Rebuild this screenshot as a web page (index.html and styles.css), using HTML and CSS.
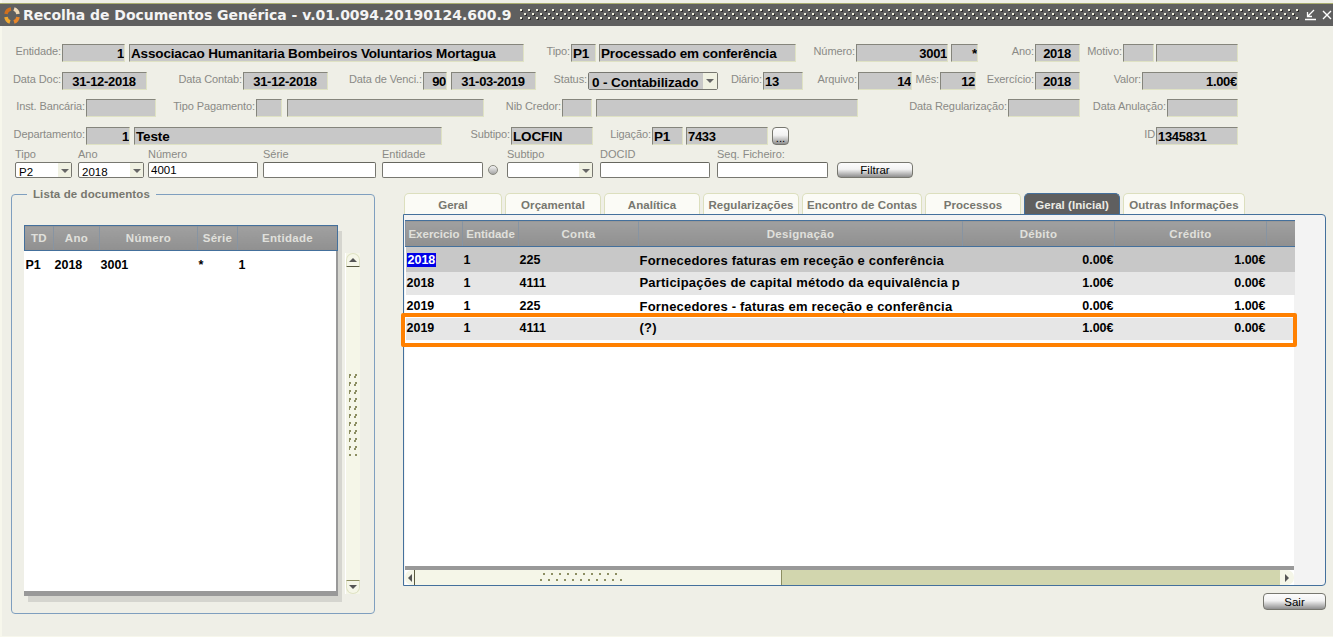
FILE: index.html
```html
<!DOCTYPE html>
<html lang="pt">

<head>
  <meta charset="utf-8">
  <title>Recolha de Documentos Genérica</title>
  <link rel="stylesheet" href="styles.css">
</head>

<body>
  <div class="titlebar">
    <svg class="app-icon" width="16" height="17" viewBox="0 0 16 17">
      <path d="M2 7 A6 6 0 0 1 7 2" fill="none" stroke="#d0701f" stroke-width="3.5"/>
      <path d="M10 2 A6 6 0 0 1 14 7" fill="none" stroke="#efd9b8" stroke-width="3.5"/>
      <path d="M14 10 A6 6 0 0 1 10 15" fill="none" stroke="#e8862a" stroke-width="3.5"/>
      <path d="M6 15 A6 6 0 0 1 2 10" fill="none" stroke="#f0a830" stroke-width="3.5"/>
    </svg>
    <span class="title-text">Recolha de Documentos Genérica - v.01.0094.20190124.600.9</span>
    <span class="title-grip"></span>
    <svg class="win-icon" width="13" height="12" viewBox="0 0 13 12">
      <path d="M10 1 L4 7 M3.5 3 V7.5 H8 M1 10.5 H12" fill="none" stroke="#fff" stroke-width="1.3"/>
    </svg>
    <svg class="win-icon close-icon" width="10" height="10" viewBox="0 0 10 10">
      <path d="M1 1 L9 9 M9 1 L1 9" fill="none" stroke="#fff" stroke-width="1.4"/>
    </svg>
  </div>

  <div class="row row1">
    <label class="w62">Entidade:</label><div class="box num dig w63">1</div>
    <div class="box ml4 w395">Associacao Humanitaria Bombeiros Voluntarios Mortagua</div>
    <label class="w47">Tipo:</label><div class="box w25">P1</div>
    <div class="box ml3 w197">Processado em conferência</div>
    <label class="w60">Número:</label><div class="box num dig w92">3001</div>
    <div class="box num ml3 w27">*</div>
    <label class="w57">Ano:</label><div class="box mid dig w45">2018</div>
    <label class="w43">Motivo:</label><div class="box w31"></div>
    <div class="box ml2 w82"></div>
  </div>

  <div class="row row2">
    <label class="w62">Data Doc:</label><div class="box mid dig w85">31-12-2018</div>
    <label class="w96">Data Contab:</label><div class="box mid dig w85">31-12-2018</div>
    <label class="w95">Data de Venci.:</label><div class="box num dig w24">90</div>
    <div class="box mid dig ml4 w85">31-03-2019</div>
    <label class="w52">Status:</label>
    <div class="combo status-combo w130"><span class="combo-text">0 - Contabilizado</span><span class="combo-arrow"></span></div>
    <label class="w45">Diário:</label><div class="box dig w40">13</div>
    <label class="w55">Arquivo:</label><div class="box num dig w54">14</div>
    <label class="w28">Mês:</label><div class="box num dig w36">12</div>
    <label class="w59">Exercício:</label><div class="box mid dig w45">2018</div>
    <label class="w62">Valor:</label><div class="box num dig w96">1.00€</div>
  </div>

  <div class="row row3">
    <label class="w86">Inst. Bancária:</label><div class="box w70"></div>
    <label class="w100">Tipo Pagamento:</label><div class="box w26"></div>
    <div class="box ml5 w197"></div>
    <label class="w78">Nib Credor:</label><div class="box w30"></div>
    <div class="box ml4 w262"></div>
    <label class="w150">Data Regularização:</label><div class="box w72"></div>
    <label class="w87">Data Anulação:</label><div class="box w71"></div>
  </div>

  <div class="row row4">
    <label class="w86">Departamento:</label><div class="box num dig w44">1</div>
    <div class="box ml4 w308">Teste</div>
    <label class="w69">Subtipo:</label><div class="box w82">LOCFIN</div>
    <label class="w59">Ligação:</label><div class="box w31">P1</div>
    <div class="box dig ml3 w82">7433</div>
    <button class="btn dots-btn ml4">...</button>
    <label class="w367">ID</label><div class="box dig w82">1345831</div>
  </div>

  <div class="filters">
    <div class="filter w57">
      <span class="filter-label">Tipo</span>
      <div class="combo"><span class="combo-text">P2</span><span class="combo-arrow"></span></div>
    </div>
    <div class="filter ml6 w66">
      <span class="filter-label">Ano</span>
      <div class="combo"><span class="combo-text">2018</span><span class="combo-arrow"></span></div>
    </div>
    <div class="filter ml4 w110">
      <span class="filter-label">Número</span>
      <input class="filter-input" type="text" value="4001">
    </div>
    <div class="filter ml5 w113">
      <span class="filter-label">Série</span>
      <input class="filter-input" type="text">
    </div>
    <div class="filter ml6 w101">
      <span class="filter-label">Entidade</span>
      <input class="filter-input" type="text">
    </div>
    <span class="radio"></span>
    <div class="filter ml9 w86">
      <span class="filter-label">Subtipo</span>
      <div class="combo"><span class="combo-text"></span><span class="combo-arrow"></span></div>
    </div>
    <div class="filter ml7 w110">
      <span class="filter-label">DOCID</span>
      <input class="filter-input" type="text">
    </div>
    <div class="filter ml7 w111">
      <span class="filter-label">Seq. Ficheiro:</span>
      <input class="filter-input" type="text">
    </div>
    <button class="btn filter-btn ml9 w76">Filtrar</button>
  </div>

  <div class="main">
    <fieldset class="doc-group">
      <legend>Lista de documentos</legend>
      <div class="doc-wrap">
        <div class="doc-list">
          <table class="grid">
            <colgroup><col class="w29"><col class="w46"><col class="w98"><col class="w40"><col class="w100"></colgroup>
            <thead>
              <tr><th>TD</th><th>Ano</th><th>Número</th><th>Série</th><th>Entidade</th></tr>
            </thead>
            <tbody>
              <tr><td>P1</td><td>2018</td><td>3001</td><td class="star">*</td><td>1</td></tr>
            </tbody>
          </table>
        </div>
        <div class="vscroll">
          <span class="cap cap-top"><i class="arrow-up"></i></span>
          <span class="vgrip"></span>
          <span class="cap cap-bottom"><i class="arrow-down"></i></span>
        </div>
      </div>
    </fieldset>

    <div class="right-col">
      <div class="tabs">
        <span class="tab w98">Geral</span>
        <span class="tab w96">Orçamental</span>
        <span class="tab w96">Analítica</span>
        <span class="tab w96">Regularizações</span>
        <span class="tab w120">Encontro de Contas</span>
        <span class="tab w96">Processos</span>
        <span class="tab active w96">Geral (Inicial)</span>
        <span class="tab w122">Outras Informações</span>
      </div>
      <div class="panel">
        <div class="sheet">
          <table class="grid movs">
            <colgroup><col class="w57"><col class="w56"><col class="w120"><col class="w324"><col class="w152"><col class="w152"><col class="w28"></colgroup>
            <thead>
              <tr><th>Exercicio</th><th>Entidade</th><th>Conta</th><th>Designação</th><th>Débito</th><th>Crédito</th><th></th></tr>
            </thead>
            <tbody>
              <tr class="current"><td><span class="selected">2018</span></td><td class="ent">1</td><td>225</td><td class="desc">Fornecedores faturas em receção e conferência</td><td class="val">0.00€</td><td class="val">1.00€</td><td></td></tr>
              <tr class="alt"><td>2018</td><td class="ent">1</td><td>4111</td><td class="desc">Participações de capital método da equivalência p</td><td class="val">1.00€</td><td class="val">0.00€</td><td></td></tr>
              <tr><td>2019</td><td class="ent">1</td><td>225</td><td class="desc">Fornecedores - faturas em receção e conferência</td><td class="val">0.00€</td><td class="val">1.00€</td><td></td></tr>
              <tr class="alt last"><td>2019</td><td class="ent">1</td><td>4111</td><td class="desc">(?)</td><td class="val">1.00€</td><td class="val">0.00€</td><td></td></tr>
            </tbody>
          </table>
          <div class="sheet-foot"></div>
          <div class="hscroll">
            <span class="hcap"><i class="arrow-left"></i></span>
            <span class="hthumb"><span class="hgrip"></span></span>
            <span class="htrack"></span>
            <span class="hcap hcap-right"><i class="arrow-right"></i></span>
          </div>
        </div>
        <div class="highlight"></div>
      </div>
      <div class="actions">
        <button class="btn exit-btn">Sair</button>
      </div>
    </div>
  </div>
</body>

</html>
```

FILE: styles.css
```css
html, body {
  margin: 0;
  padding: 0;
}

body {
  width: 1333px;
  height: 637px;
  overflow: hidden;
  background-color: #efefe7;
  box-shadow: inset 2px -1px 0 #f7f7ec;
  font-family: "Liberation Sans", Arial, sans-serif;
  color: #000;
}

/* title bar */
.titlebar {
  display: flex;
  align-items: center;
  height: 22px;
  margin-top: 3px;
  border-top: 1px solid #a9ad70;
  background-color: #5f5f5f;
}

.app-icon {
  margin-left: 4px;
  flex: none;
}

.title-text {
  margin-left: 3px;
  font-family: "DejaVu Sans", sans-serif;
  font-weight: bold;
  font-size: 14px;
  letter-spacing: -0.03px;
  color: #f4f4f4;
  white-space: nowrap;
}

.title-grip {
  width: 780px;
  height: 12px;
  margin-left: 9px;
  flex: none;
  background: radial-gradient(circle at 1px 1px, #f2f2e0 1px, transparent 1px) 0 0 / 8px 8px,
    radial-gradient(circle at 1px 1px, #f2f2e0 1px, transparent 1px) 4px 4px / 8px 8px,
    radial-gradient(circle at 2px 2px, #2a2a2a 1px, transparent 1px) 0 0 / 8px 8px,
    radial-gradient(circle at 2px 2px, #2a2a2a 1px, transparent 1px) 4px 4px / 8px 8px;
}

.win-icon {
  margin-left: 4px;
  flex: none;
}

.close-icon {
  margin-left: 5px;
}

/* form rows */
.row {
  display: flex;
  height: 18px;
}

.row1 { margin-top: 18px; }
.row2 { margin-top: 10px; }
.row3 { margin-top: 9px; }
.row4 { margin-top: 10px; }

.row label {
  flex: none;
  padding-right: 1px;
  box-sizing: border-box;
  text-align: right;
  font-size: 11px;
  line-height: 15px;
  letter-spacing: -0.1px;
  color: #8a8a86;
  white-space: nowrap;
}

.box {
  flex: none;
  box-sizing: border-box;
  height: 18px;
  padding: 0 2px 0 1px;
  overflow: hidden;
  background-color: #c8c8c8;
  border-top: 1px solid #85857c;
  border-left: 1px solid #85857c;
  border-right: 1px solid #dfe2c4;
  border-bottom: 1px solid #dfe2c4;
  font-weight: bold;
  font-size: 13.5px;
  line-height: 17px;
  letter-spacing: -0.15px;
  white-space: nowrap;
}

.num {
  padding-right: 0;
  text-align: right;
}

.mid { text-align: center; }

.dig {
  font-size: 13px;
  letter-spacing: -0.3px;
}

.combo {
  display: flex;
  box-sizing: border-box;
  height: 16px;
  border: 1px solid #777770;
  border-radius: 2px;
  background-color: #fff;
  font-size: 11.5px;
  line-height: 15px;
}

.combo-text {
  flex: 1;
  padding: 2px 0 0 3px;
  overflow: hidden;
  white-space: nowrap;
}

.combo-arrow {
  position: relative;
  flex: none;
  width: 13px;
  background-color: #f0f1e2;
}

.combo-arrow::after {
  content: "";
  position: absolute;
  left: 3px;
  top: 6px;
  border-left: 4px solid transparent;
  border-right: 4px solid transparent;
  border-top: 4px solid #666;
}

.status-combo {
  height: 18px;
  background-color: #fff;
  font-weight: bold;
  font-size: 13.5px;
  letter-spacing: -0.1px;
}

.status-combo .combo-text {
  padding: 2px 0 0 3px;
  background-color: #c8c8c8;
}

.status-combo .combo-arrow {
  width: 14px;
}

.btn {
  box-sizing: border-box;
  margin: 0;
  padding: 0;
  border: 1px solid #77776f;
  border-radius: 4px;
  background: linear-gradient(#fcfcfc 0%, #f2f2f2 45%, #8f8f8f 100%);
  font-family: "Liberation Sans", Arial, sans-serif;
  font-size: 11.5px;
  color: #000;
}

.dots-btn {
  flex: none;
  width: 17px;
  height: 18px;
  line-height: 20px;
}

/* filter row */
.filters {
  display: flex;
  align-items: flex-end;
  height: 30px;
  margin-top: 3px;
  padding-left: 15px;
}

.filter {
  display: flex;
  flex: none;
  flex-direction: column;
}

.filter-label {
  height: 14px;
  font-size: 11px;
  line-height: 13px;
  color: #8a8a86;
  white-space: nowrap;
}

.filter-input {
  box-sizing: border-box;
  width: 100%;
  height: 16px;
  margin: 0;
  padding: 0 2px;
  border: 1px solid #777770;
  border-top-color: #66665e;
  border-radius: 2px;
  background-color: #fff;
  font-family: "Liberation Sans", Arial, sans-serif;
  font-size: 11.5px;
}

.radio {
  flex: none;
  box-sizing: border-box;
  width: 10px;
  height: 10px;
  margin: 0 0 3px 5px;
  border: 1px solid #88887f;
  border-radius: 50%;
  background: linear-gradient(#f4f4f4, #a5a5a5);
}

.filter-btn {
  flex: none;
  height: 16px;
}

/* main area */
.main {
  display: flex;
  margin: 9px 0 0 11px;
}

.doc-group {
  flex: none;
  box-sizing: border-box;
  width: 364px;
  height: 427px;
  margin: 0;
  padding: 24px 0 0 12px;
  border: 1px solid #7f9fbf;
  border-radius: 4px;
}

.doc-group legend {
  margin-left: 3px;
  padding: 0 6px;
  font-weight: bold;
  font-size: 11.5px;
  line-height: 14px;
  letter-spacing: 0.1px;
  color: #77776f;
}

.doc-wrap {
  display: flex;
}

.doc-list {
  flex: none;
  box-sizing: border-box;
  width: 314px;
  height: 371px;
  background-color: #fff;
  border-right: 2px solid #999;
  border-bottom: 5px solid #999;
  box-shadow: 4px 6px 0 #d5d5cf;
}

.grid {
  table-layout: fixed;
  width: 100%;
  border-collapse: collapse;
  font-size: 12.5px;
}

.doc-list .grid {
  width: 314px;
}

.grid th {
  height: 25px;
  padding: 0;
  box-sizing: border-box;
  background: linear-gradient(#a0a0a0, #909090);
  border-top: 1px solid #44709c;
  border-bottom: 1px solid #44709c;
  border-left: 1px solid #8794a2;
  font-weight: bold;
  font-size: 11.5px;
  letter-spacing: 0.3px;
  color: #e0e0dc;
  text-align: center;
}

.doc-list .grid th:first-child { border-left-color: #44709c; }
.doc-list .grid th:last-child { border-right: 1px solid #44709c; }

.grid td {
  height: 23px;
  padding: 0 0 0 1px;
  box-sizing: border-box;
  font-weight: bold;
  font-size: 12.5px;
  white-space: nowrap;
  overflow: hidden;
}

.doc-list .grid td {
  padding-top: 1px;
  height: 27px;
}

.star { padding-left: 2px; }

.vscroll {
  display: flex;
  flex: none;
  flex-direction: column;
  width: 15px;
  height: 341px;
  margin: 28px 0 0 7px;
  background-color: #f5f6e8;
  border-left: 1px solid #fff;
  box-sizing: border-box;
}

.cap {
  display: flex;
  flex: none;
  align-items: center;
  justify-content: center;
  height: 14px;
  box-sizing: border-box;
  background-color: #f5f6e8;
  border: 1px solid #dfe2c4;
}

.cap-top {
  border-radius: 7px 7px 0 0;
  border-bottom: 1px solid #5a5a40;
}

.cap-bottom {
  margin-top: auto;
  border-radius: 0 0 7px 7px;
  border-top: 1px solid #8c8e62;
}

.arrow-up {
  border-left: 4px solid transparent;
  border-right: 4px solid transparent;
  border-bottom: 4px solid #555;
}

.arrow-down {
  border-left: 4px solid transparent;
  border-right: 4px solid transparent;
  border-top: 4px solid #555;
}

.vgrip {
  width: 9px;
  height: 82px;
  margin: 107px 0 0 3px;
  background: radial-gradient(circle at 1px 1px, #8c8e62 0.8px, transparent 1px) 0 0 / 6px 8px,
    radial-gradient(circle at 1px 1px, #8c8e62 0.8px, transparent 1px) 5px 2px / 6px 8px;
}

/* tabs and panel */
.right-col {
  flex: none;
  width: 923px;
  margin: 6px 0 0 28px;
}

.tabs {
  display: flex;
  gap: 3px;
  height: 21px;
  padding-left: 1px;
}

.tab {
  flex: none;
  box-sizing: border-box;
  height: 21px;
  border: 1px solid #dcdfbe;
  border-bottom: 0;
  border-radius: 5px 5px 0 0;
  background-color: #fbfbf6;
  font-weight: bold;
  font-size: 11.5px;
  line-height: 23px;
  letter-spacing: 0.05px;
  text-align: center;
  color: #77776f;
}

.tab.active {
  background-color: #5f5f5f;
  border-color: #44709c;
  color: #ecece6;
}

.panel {
  position: relative;
  box-sizing: border-box;
  height: 372px;
  padding: 5px 31px 0 1px;
  background-color: #f3f3f3;
  border: 1px solid #44709c;
  border-radius: 0 4px 4px 0;
}

.sheet {
  display: flex;
  flex-direction: column;
  height: 365px;
  background-color: #fff;
}

.movs th {
  height: 26px;
}

.movs th:first-child,
.movs th:nth-child(2) {
  letter-spacing: 0;
}

.current td { background-color: #c8c8c8; }
.alt td { background-color: #e6e6e6; }

.movs .current td {
  height: 25px;
  padding-top: 2px;
}

.movs .alt td {
  padding-bottom: 1px;
}

.movs .last td {
  height: 22px;
  padding-bottom: 2px;
}

.movs .desc {
  font-size: 13px;
  letter-spacing: 0.2px;
}

.selected {
  display: inline-block;
  padding: 0 1px;
  background-color: #0000e8;
  color: #fff;
}

.movs td.val,
.movs .alt td.val,
.movs .current td.val {
  padding-right: 1px;
  padding-left: 0;
  text-align: right;
}

.sheet-foot {
  flex: none;
  height: 4px;
  margin-top: auto;
  background-color: #999;
}

.hscroll {
  display: flex;
  flex: none;
  height: 15px;
}

.hcap {
  display: flex;
  flex: none;
  align-items: center;
  justify-content: center;
  width: 10px;
  box-sizing: border-box;
  background-color: #f5f6e8;
  border-right: 1px solid #5a5a40;
  border-radius: 7px 0 0 7px;
}

.hcap-right {
  width: 14px;
  border-right: 0;
  border-radius: 0 7px 7px 0;
}

.arrow-left {
  border-top: 4px solid transparent;
  border-bottom: 4px solid transparent;
  border-right: 4px solid #555;
}

.arrow-right {
  border-top: 4px solid transparent;
  border-bottom: 4px solid transparent;
  border-left: 4px solid #555;
}

.hthumb {
  display: flex;
  flex: none;
  align-items: center;
  width: 367px;
  box-sizing: border-box;
  background-color: #f5f6e8;
  border-right: 1px solid #8c8e62;
}

.hgrip {
  width: 82px;
  height: 9px;
  margin-left: 125px;
  background-image: linear-gradient(90deg, #8c8e62 2px, transparent 2px),
    linear-gradient(90deg, #8c8e62 2px, transparent 2px);
  background-position: 3px 0, 0 6px;
  background-size: 8px 2px;
  background-repeat: repeat-x;
}

.htrack {
  flex: 1;
  background-color: #d2d6ae;
}

/* the mark around the last row */
.highlight {
  position: absolute;
  left: -3px;
  top: 98px;
  box-sizing: border-box;
  width: 896px;
  height: 34px;
  border: 4px solid #ff8000;
  border-radius: 2px;
}

.actions {
  display: flex;
  justify-content: flex-end;
  margin-top: 7px;
}

.exit-btn {
  width: 63px;
  height: 17px;
}

/* widths and small gaps */
.ml2 { margin-left: 2px; }
.ml3 { margin-left: 3px; }
.ml4 { margin-left: 4px; }
.ml5 { margin-left: 5px; }
.ml6 { margin-left: 6px; }
.ml7 { margin-left: 7px; }
.ml9 { margin-left: 9px; }

.w24 { width: 24px; }
.w25 { width: 25px; }
.w26 { width: 26px; }
.w27 { width: 27px; }
.w28 { width: 28px; }
.w29 { width: 29px; }
.w30 { width: 30px; }
.w31 { width: 31px; }
.w36 { width: 36px; }
.w40 { width: 40px; }
.w43 { width: 43px; }
.w44 { width: 44px; }
.w45 { width: 45px; }
.w46 { width: 46px; }
.w47 { width: 47px; }
.w52 { width: 52px; }
.w54 { width: 54px; }
.w55 { width: 55px; }
.w56 { width: 56px; }
.w57 { width: 57px; }
.w59 { width: 59px; }
.w60 { width: 60px; }
.w62 { width: 62px; }
.w63 { width: 63px; }
.w66 { width: 66px; }
.w69 { width: 69px; }
.w70 { width: 70px; }
.w71 { width: 71px; }
.w72 { width: 72px; }
.w76 { width: 76px; }
.w78 { width: 78px; }
.w82 { width: 82px; }
.w85 { width: 85px; }
.w86 { width: 86px; }
.w87 { width: 87px; }
.w92 { width: 92px; }
.w95 { width: 95px; }
.w96 { width: 96px; }
.w98 { width: 98px; }
.w100 { width: 100px; }
.w101 { width: 101px; }
.w110 { width: 110px; }
.w111 { width: 111px; }
.w113 { width: 113px; }
.w120 { width: 120px; }
.w122 { width: 122px; }
.w130 { width: 130px; }
.w150 { width: 150px; }
.w152 { width: 152px; }
.w197 { width: 197px; }
.w262 { width: 262px; }
.w308 { width: 308px; }
.w324 { width: 324px; }
.w367 { width: 367px; }
.w395 { width: 395px; }
```
